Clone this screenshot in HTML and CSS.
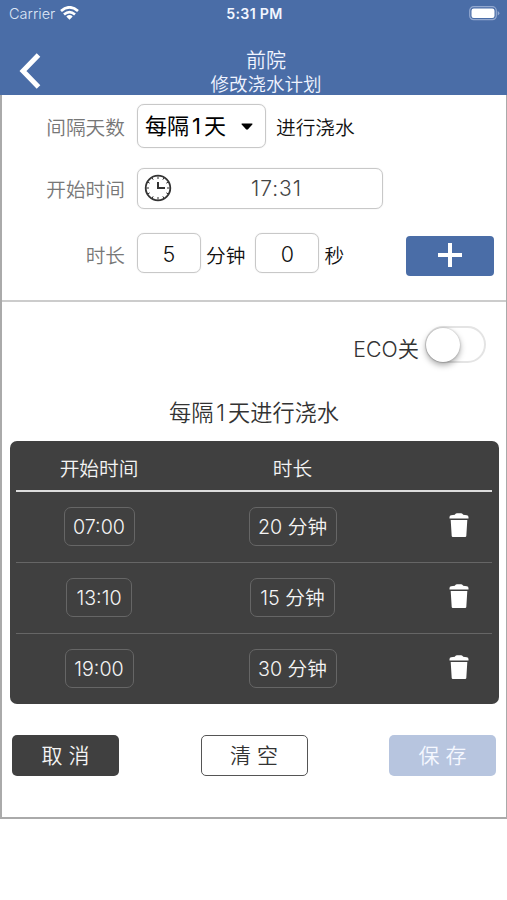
FILE: index.html
```html
<!DOCTYPE html>
<html lang="zh-CN">
<head>
<meta charset="utf-8">
<title>修改浇水计划</title>
<link rel="stylesheet" href="styles.css">
</head>
<body>
<svg class="defs" width="0" height="0">
  <symbol id="trash" viewBox="0 0 20 24">
    <path d="M.5 5.5V4.2Q.5 2.4 2.2 2.2L5.8 1.8Q6.4.3 7.8.3H12.200Q13.600.3 14.200 1.800L17.800 2.200Q19.500 2.400 19.500 4.200V5.500ZM1.700 7H18.300L17.300 23Q17.200 24 16.200 24H3.800Q2.800 24 2.700 23Z"/>
  </symbol>
</svg>
<header class="header">
  <div class="status">
    <div class="carrier">Carrier
      <svg width="19" height="14" viewBox="0 0 19 14" fill="none" stroke="#fff" stroke-width="2.700"><path d="M1 5Q9.500-2.400 18 5M4 8.500Q9.500 3.800 15 8.500"/><path d="M9.500 13.700L6.300 10.500Q9.500 7.700 12.700 10.500Z" fill="#fff" stroke="none"/></svg>
    </div>
    <div class="clock">5:31 PM</div>
    <svg class="battery" width="31" height="15" viewBox="0 0 31 15"><rect x=".7" y=".7" width="26.600" height="13" rx="4" fill="none" stroke="#93a8cf" stroke-width="1.200"/><rect x="2.500" y="2.500" width="23" height="9.500" rx="2.200" fill="#fff"/><path d="M28.700 5Q30.400 5.800 30.400 7.200T28.700 9.400Z" fill="#93a8cf"/></svg>
  </div>
  <div class="nav">
    <svg class="back" width="22" height="36" viewBox="0 0 22 36"><path d="M19.500 2L4 18L19.500 34" fill="none" stroke="#fff" stroke-width="5"/></svg>
    <div class="titles"><h1>前院</h1><p>修改浇水计划</p></div>
  </div>
</header>
<main class="panel">
  <section class="form">
    <div class="row row-days">
      <label>间隔天数</label>
      <div class="box select"><span>每隔<span class="num">1</span>天</span><svg width="12" height="7" viewBox="0 0 12 7"><path d="M1 .5H11Q12 .6 11.300 1.500L7 6.300Q6 7.200 5 6.300L.7 1.500Q0 .6 1 .5Z"/></svg></div>
      <span class="after">进行浇水</span>
    </div>
    <div class="row row-start">
      <label>开始时间</label>
      <div class="box time">
        <svg width="28" height="28" viewBox="0 0 28 28" fill="none" stroke="#333"><circle cx="14" cy="14" r="12.300" stroke-width="1.800"/><path d="M14 8V14H21" stroke-width="2"/><path d="M14 2.500V5M14 23V25.500M2.500 14H5M23 14H25.500M8.200 4L9.200 5.700M19.800 4L18.800 5.700M4 8.200L5.700 9.200M24 8.200L22.300 9.200M4 19.800L5.700 18.800M24 19.800L22.300 18.800M8.200 24L9.200 22.300M19.800 24L18.800 22.300" stroke-width="1"/></svg>
        <span>17:31</span>
      </div>
    </div>
    <div class="row row-length">
      <label>时长</label>
      <div class="box count">5</div><span class="unit">分钟</span>
      <div class="box count second">0</div><span class="unit">秒</span>
      <button class="add"><svg width="24" height="24" viewBox="0 0 24 24"><path d="M12 0V24M0 12H24" stroke="#fff" stroke-width="4"/></svg></button>
    </div>
  </section>
  <section class="eco"><span>ECO关</span><div class="switch"><div class="knob"></div></div></section>
  <h2 class="summary">每隔<span class="num">1</span>天进行浇水</h2>
  <section class="plan">
    <div class="line head"><span>开始时间</span><span>时长</span></div>
    <div class="line"><span><b class="t1">07:00</b></span><span><b class="d1">20 分钟</b></span><svg width="20" height="24"><use href="#trash"/></svg></div>
    <div class="line"><span><b class="t2">13:10</b></span><span><b class="d2">15 分钟</b></span><svg width="20" height="24"><use href="#trash"/></svg></div>
    <div class="line"><span><b class="t3">19:00</b></span><span><b class="d1">30 分钟</b></span><svg width="20" height="24"><use href="#trash"/></svg></div>
  </section>
  <footer class="actions">
    <button class="cancel">取 消</button>
    <button class="clear">清 空</button>
    <button class="save">保 存</button>
  </footer>
</main>
</body>
</html>
```
FILE: styles.css
```css
* { box-sizing: border-box; margin: 0; padding: 0; }
body { background: #fff; color: #111; font: 19.700px/28px Inter, "Noto Sans CJK SC", sans-serif; font-weight: 350; white-space: nowrap; }
.defs { display: block; }
svg { display: block; flex: none; }
button { border: 0; font: inherit; }
label { width: 123px; margin-right: 1px; padding-top: 2px; text-align: right; color: #777; flex: none; }

.header { height: 95px; background: #4a6da7; color: #fff; }
.status { display: grid; grid-template-columns: 1fr auto 1fr; height: 28px; align-items: center; padding: 0 7px 0 9px; }
.carrier { display: flex; gap: 6px; align-items: center; font-size: 14.500px; color: #dde6f6; }
.carrier svg { margin: -2px 0 0 -1px; }
.clock { font-size: 14.200px; font-weight: 600; color: #f2f6ff; letter-spacing: .3px; }
.battery { justify-self: end; margin-top: -1px; }
.nav { display: grid; grid-template-columns: 60px 1fr 35px; height: 67px; }
.back { margin: 25px 0 0 19px; }
.titles { text-align: center; padding-top: 20px; color: #f0f4ff; }
.titles h1 { font-size: 20px; line-height: 26px; font-weight: 350; }
.titles p { font-size: 18.500px; line-height: 20px; }

.panel { height: 724px; border: solid #aaa; border-width: 0 1px 2px 2px; }
.form { height: 207px; padding-top: 9px; border-bottom: 2px solid #ccc; }
.row { display: flex; align-items: center; }
.box { margin-left: 11px; border: 1.500px solid #c8c8c8; border-radius: 7px; display: flex; align-items: center; box-shadow: 0 0 1px #ccc; }
.row-days { height: 44px; }
.row-days label { padding-top: 3px; }
.select { width: 129px; height: 44px; padding: 0 12px 0 7px; justify-content: space-between; font-size: 22px; font-weight: 400; color: #000; }
.num { margin: 0 3px; }
.after { margin-left: 10px; padding-top: 4px; }
.row-start { height: 41px; margin-top: 20px; }
.time { width: 246px; height: 41px; padding-left: 6px; color: #444; font-size: 21px; }
.time svg { margin-top: -2px; }
.time span { flex: 1; text-align: center; padding-right: 1px; letter-spacing: 1px; }
.row-length { height: 42px; margin-top: 23px; }
.row-length label { padding-top: 6px; }
.count { width: 64px; height: 40px; padding-top: 2px; justify-content: center; font-size: 21.500px; flex: none; }
.second { margin-left: 10px; }
.unit { margin-left: 5px; padding-top: 6px; }
.add { width: 88px; height: 40px; margin: 5px 12px 0 auto; background: #4a6da7; border-radius: 4px; display: grid; justify-items: center; padding-top: 7px; }

.eco { display: flex; justify-content: flex-end; align-items: center; padding-right: 20px; margin-top: 23px; height: 42px; font-size: 21.300px; color: #333; gap: 6px; }
.eco span { padding-top: 6px; }
.switch { width: 61px; height: 37px; border: 2px solid #e4e4e4; border-radius: 19px; margin-top: -3px; }
.knob { width: 34px; height: 34px; margin: 0 0 0 -1px; border-radius: 50%; background: #fff; box-shadow: 0 3px 6px rgba(0,0,0,.35), 0 0 2px rgba(0,0,0,.25); }
.summary { margin-top: 30px; height: 44px; font-size: 22.200px; line-height: 31px; font-weight: 350; text-align: center; color: #333; }

.plan { width: 489px; height: 263px; margin-left: 8px; padding: 0 7px 0 6px; border-radius: 7px; background: #404040; color: #f4f4f4; }
.line { height: 71px; display: grid; grid-template-columns: 166px 221px 1fr; align-items: center; justify-items: center; border-bottom: 1px solid #666; padding-bottom: 1px; }
.line:last-child { border: 0; height: 70px; }
.line.head { height: 51px; border-bottom: 2px solid #ddd; padding-top: 7px; }
.line b { display: block; height: 39px; line-height: 38px; border: 1px solid #666; border-radius: 7px; font-weight: 350; text-align: center; }
.line svg { fill: #fff; margin: -4px 0 0 46px; justify-self: start; }
.t1 { width: 71px; }
.t2 { width: 66px; }
.t3 { width: 69px; }
.d1 { width: 88px; }
.d2 { width: 85px; }

.actions { display: flex; justify-content: space-between; padding: 31px 10px 0; }
.actions button { width: 107px; height: 41px; border-radius: 5px; font-size: 21px; }
.cancel { background: #404040; color: #f4f4f4; }
.clear { background: #fff; color: #333; border: 1.500px solid #555; }
.save { background: #b7c5df; color: #f5f8ff; }
```
